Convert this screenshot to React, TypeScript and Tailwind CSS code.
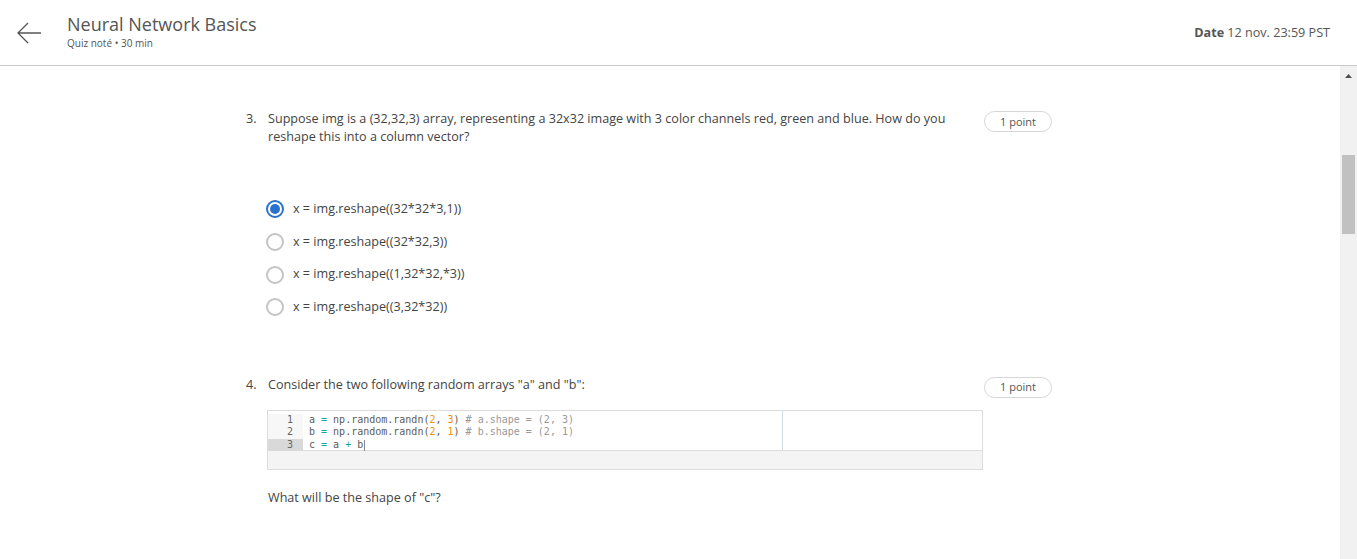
import React from 'react'

const font = { fontFamily: '"Open Sans", "Liberation Sans", sans-serif' }

function Radio({ checked }: { checked?: boolean }) {
  if (checked) {
    return (
      <span className="flex h-[18px] w-[18px] items-center justify-center rounded-full border-2 border-[#2a73cc]">
        <span className="h-[10px] w-[10px] rounded-full bg-[#2a73cc]"></span>
      </span>
    )
  }
  return <span className="h-[18px] w-[18px] rounded-full border-2 border-[#c4c4c4]"></span>
}

function Pill() {
  return (
    <div className="flex h-[21px] w-[68px] shrink-0 items-center justify-center rounded-full border border-[#d6d6d6] text-[11px] text-[#555]">
      1 point
    </div>
  )
}

export default function App() {
  const options = [
    'x = img.reshape((32*32*3,1))',
    'x = img.reshape((32*32,3))',
    'x = img.reshape((1,32*32,*3))',
    'x = img.reshape((3,32*32))',
  ]

  return (
    <div className="flex h-screen flex-col overflow-hidden bg-white text-[#444]" style={font}>
      <div className="flex h-[66px] shrink-0 items-center border-b border-[#c9c9c9]">
        <div className="flex w-[67px] items-center pl-[16px]">
          <svg width="26" height="22" viewBox="0 0 26 22" fill="none" stroke="#555" strokeWidth="1.3">
            <path d="M25 11H2M12 1L2 11l10 10" />
          </svg>
        </div>
        <div className="-mt-[4px] flex flex-col">
          <span className="text-[18px] leading-[24px] text-[#555]">Neural Network Basics</span>
          <span className="text-[10px] leading-[14px] text-[#555]">Quiz noté • 30 min</span>
        </div>
        <div className="ml-auto mt-[2px] pr-[27px] text-[12.6px] text-[#555]">
          <span className="font-bold">Date</span> 12 nov. 23:59 PST
        </div>
      </div>

      <div className="flex min-h-0 flex-1">
        <div className="flex-1 pt-[44px]">
          <div className="ml-[246px] w-[806px]">
            <div className="flex text-[12.6px] leading-[18px]">
              <span className="w-[22px] shrink-0">3.</span>
              <span className="w-[700px]">
                Suppose img is a (32,32,3) array, representing a 32x32 image with 3 color channels red, green and blue. How do you reshape this into a column vector?
              </span>
              <div className="ml-auto mt-[1px]"><Pill /></div>
            </div>

            <div className="mt-[47px] flex flex-col pl-[20px]">
              {options.map((o, i) => (
                <div key={o} className="flex h-[32.7px] items-center gap-[9px] text-[12.6px]">
                  <Radio checked={i === 0} />
                  <span>{o}</span>
                </div>
              ))}
            </div>

            <div className="mt-[52px] flex text-[12.6px] leading-[18px]">
              <span className="w-[22px] shrink-0">4.</span>
              <span>Consider the two following random arrays "a" and "b":</span>
              <div className="ml-auto mt-[1px]"><Pill /></div>
            </div>

            <div className="ml-[21px] mt-[12px] w-[716px] border border-[#dcdcdc]">
              <div className="flex h-[40px] border-b border-[#dcdcdc]">
                <div
                  className="flex w-[515px] border-r border-[#d3dbe3] pt-[3px] text-[10px] leading-[12.5px] text-[#5b5b5b]"
                  style={{ fontFamily: '"DejaVu Sans Mono", "Liberation Mono", monospace' }}
                >
                  <div className="flex w-[35px] flex-col text-right text-[#666]">
                    <span className="bg-[#f7f7f7] pr-[10px]">1</span>
                    <span className="bg-[#f7f7f7] pr-[10px]">2</span>
                    <span className="bg-[#d9d9d9] pr-[10px]">3</span>
                  </div>
                  <div className="flex flex-col pl-[6px] whitespace-pre">
                    <span>
                      a <span className="text-[#1ea39b]">=</span> np.random.randn(<span className="text-[#f0900a]">2</span>, <span className="text-[#f0900a]">3</span>) <span className="text-[#999]"># a.shape = (2, 3)</span>
                    </span>
                    <span>
                      b <span className="text-[#1ea39b]">=</span> np.random.randn(<span className="text-[#f0900a]">2</span>, <span className="text-[#f0900a]">1</span>) <span className="text-[#999]"># b.shape = (2, 1)</span>
                    </span>
                    <span className="flex items-center">
                      <span>{'c '}</span>
                      <span className="text-[#1ea39b]">=</span>
                      <span>{' a '}</span>
                      <span className="text-[#1ea39b]">+</span>
                      <span>{' b'}</span>
                      <span className="ml-[1px] h-[11px] w-[1px] bg-[#888]"></span>
                    </span>
                  </div>
                </div>
                <div className="flex-1"></div>
              </div>
              <div className="h-[18px] bg-[#f4f4f4]"></div>
            </div>

            <div className="mt-[19px] pl-[22px] text-[12.6px] leading-[18px]">What will be the shape of "c"?</div>
          </div>
        </div>

        <div className="flex w-[17px] shrink-0 flex-col items-center bg-[#f1f1f1]">
          <svg className="mt-[8px]" width="7" height="4" viewBox="0 0 7 4">
            <path d="M0 4L3.5 0L7 4Z" fill="#505050" />
          </svg>
          <div className="mt-[77px] h-[79px] w-[13px] bg-[#c1c1c1]"></div>
        </div>
      </div>
    </div>
  )
}
